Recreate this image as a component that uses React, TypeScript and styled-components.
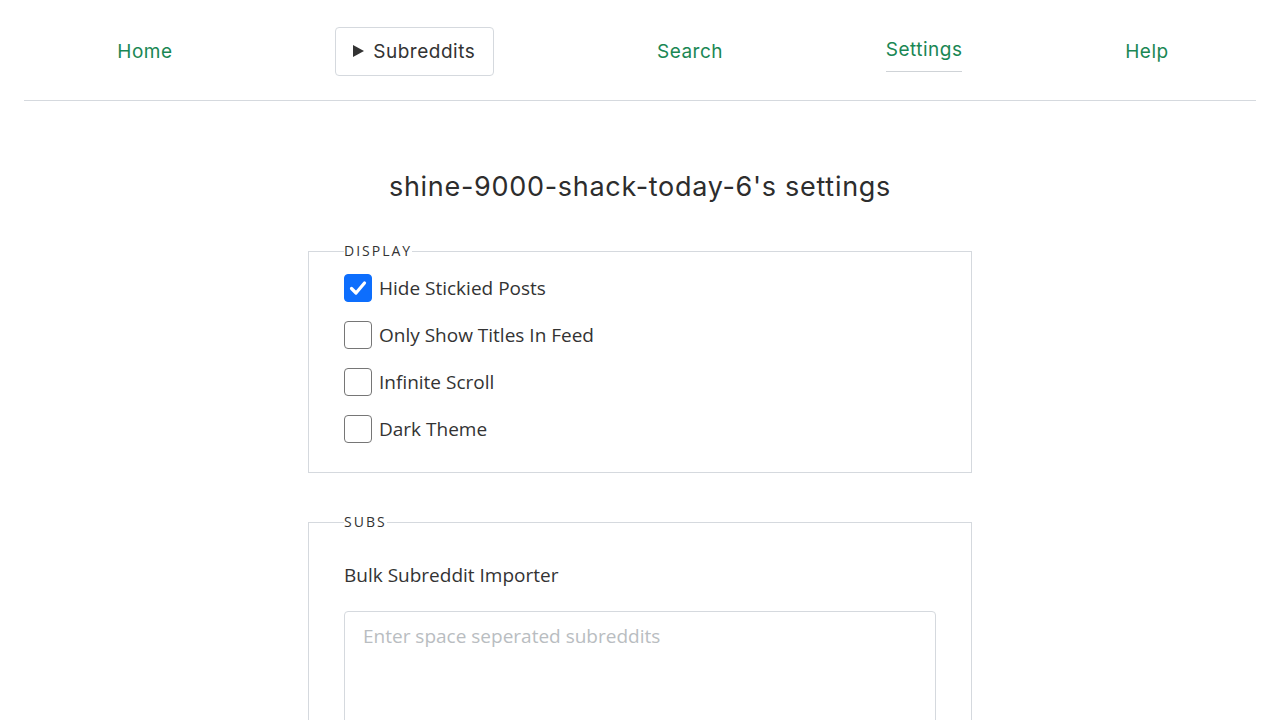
import React from "react";
import styled, { createGlobalStyle } from "styled-components";

const GlobalStyle = createGlobalStyle`
  html, body { margin: 0; padding: 0; background: #fff; }
  body { font-family: "Open Sans", "Noto Sans", sans-serif; color: #333; }
  * { box-sizing: border-box; }
`;

const HEAD_FONT = `"Inter", "Noto Sans", sans-serif`;

const Nav = styled.nav`
  margin: 0 24px;
  height: 101px;
  padding: 2px 6px 0 12px;
  border-bottom: 1px solid #d5d9de;
  display: flex;
  align-items: center;
  justify-content: space-around;
`;

const NavLink = styled.a<{ $active?: boolean }>`
  font-family: ${HEAD_FONT};
  font-size: 19px;
  font-weight: 400;
  letter-spacing: 0.5px;
  color: #1a8754;
  text-decoration: none;
  line-height: 28px;
  margin-top: ${(p) => (p.$active ? "6px" : "2px")};
  padding-bottom: ${(p) => (p.$active ? "7px" : "0")};
  border-bottom: ${(p) => (p.$active ? "1px solid #cfd3d7" : "none")};
`;

const DropButton = styled.button`
  font-family: ${HEAD_FONT};
  font-size: 19px;
  letter-spacing: 0.5px;
  color: #333;
  background: #fff;
  border: 1px solid #d5d9de;
  border-radius: 4px;
  height: 49px;
  padding: 0 18px 0 17px;
  display: flex;
  align-items: center;
  gap: 9px;
`;

const Main = styled.main`
  display: flex;
  flex-direction: column;
  align-items: center;
`;

const Title = styled.h1`
  font-family: ${HEAD_FONT};
  font-size: 27px;
  letter-spacing: 0.7px;
  font-weight: 400;
  color: #2d2d2d;
  line-height: 31px;
  margin: 70px 0 39px;
`;

const Fieldset = styled.fieldset`
  width: 664px;
  margin: 0 0 39px;
  padding: 3px 35px 20px;
  border: 1px solid #d5d9de;
  min-width: 0;
`;

const Legend = styled.legend`
  padding: 0;
  font-size: 14px;
  line-height: 20px;
  letter-spacing: 2px;
  text-transform: uppercase;
  color: #333;
`;

const CheckRow = styled.label`
  display: flex;
  align-items: center;
  height: 47px;
  gap: 7px;
  font-size: 19px;
  color: #333;
  cursor: pointer;
`;

const Box = styled.span<{ $checked: boolean }>`
  width: 28px;
  height: 28px;
  border-radius: 4px;
  border: 1px solid ${(p) => (p.$checked ? "#0d6efd" : "#767676")};
  background: ${(p) => (p.$checked ? "#0d6efd" : "#fff")};
  display: flex;
  align-items: center;
  justify-content: center;
  flex-shrink: 0;
`;

const FieldLabel = styled.div`
  font-size: 19px;
  line-height: 28px;
  color: #333;
  margin: 26px 0 22px;
`;

const TextArea = styled.textarea`
  display: block;
  width: 100%;
  height: 160px;
  border: 1px solid #d5d9de;
  border-radius: 4px;
  padding: 11px 18px;
  font-family: "Open Sans", "Noto Sans", sans-serif;
  font-size: 19px;
  line-height: 26px;
  color: #333;
  resize: vertical;
  &::placeholder { color: #b9bdc1; }
`;

const Check = ({ checked, label }: { checked: boolean; label: string }) => (
  <CheckRow>
    <Box $checked={checked}>
      {checked && (
        <svg width="20" height="20" viewBox="0 0 20 20">
          <path d="M3.5 10.5 L8 15 L16.5 5" fill="none" stroke="#fff" strokeWidth="3.2" strokeLinecap="round" strokeLinejoin="round" />
        </svg>
      )}
    </Box>
    {label}
  </CheckRow>
);

export default function App() {
  return (
    <>
      <GlobalStyle />
      <Nav>
        <NavLink href="#">Home</NavLink>
        <DropButton>
          <svg width="11" height="12" viewBox="0 0 11 12"><path d="M0 0 L11 6 L0 12 Z" fill="#333" /></svg>
          Subreddits
        </DropButton>
        <NavLink href="#">Search</NavLink>
        <NavLink href="#" $active>Settings</NavLink>
        <NavLink href="#">Help</NavLink>
      </Nav>
      <Main>
        <Title>shine-9000-shack-today-6's settings</Title>
        <Fieldset>
          <Legend>Display</Legend>
          <Check checked label="Hide Stickied Posts" />
          <Check checked={false} label="Only Show Titles In Feed" />
          <Check checked={false} label="Infinite Scroll" />
          <Check checked={false} label="Dark Theme" />
        </Fieldset>
        <Fieldset>
          <Legend>Subs</Legend>
          <FieldLabel>Bulk Subreddit Importer</FieldLabel>
          <TextArea placeholder="Enter space seperated subreddits" />
        </Fieldset>
      </Main>
    </>
  );
}
